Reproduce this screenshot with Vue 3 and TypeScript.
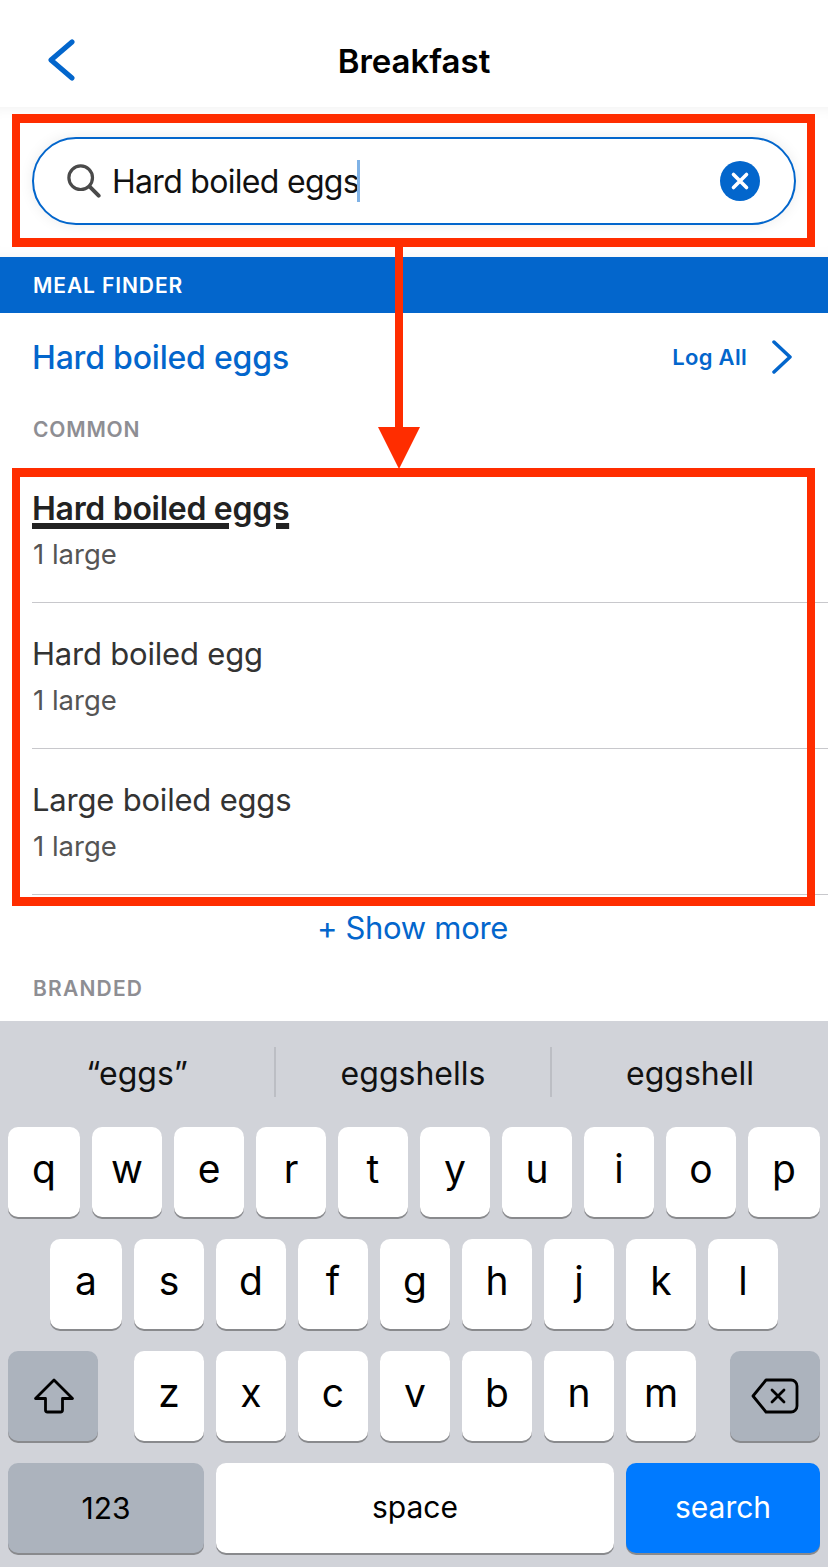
<script setup lang="ts">
const foods = [
  { name: 'Hard boiled eggs', unit: '1 large', match: true },
  { name: 'Hard boiled egg', unit: '1 large', match: false },
  { name: 'Large boiled eggs', unit: '1 large', match: false },
]
const row1 = ['q', 'w', 'e', 'r', 't', 'y', 'u', 'i', 'o', 'p']
const row2 = ['a', 's', 'd', 'f', 'g', 'h', 'j', 'k', 'l']
const row3 = ['z', 'x', 'c', 'v', 'b', 'n', 'm']
</script>

<template>
  <div class="screen">
    <header class="nav">
      <svg class="back" width="30" height="42" viewBox="0 0 30 42"><path d="M25 3 L4 21 L25 39" fill="none" stroke="#0366cc" stroke-width="5" stroke-linecap="round" stroke-linejoin="round"/></svg>
      <h1>Breakfast</h1>
    </header>

    <section class="search-wrap">
      <div class="search">
        <svg class="mag" width="34" height="34" viewBox="0 0 36 36"><circle cx="14.500" cy="14.500" r="12.500" fill="none" stroke="#4a4a4a" stroke-width="3.400"/><path d="M24 24 L33.500 33.500" stroke="#4a4a4a" stroke-width="4.200" stroke-linecap="round"/></svg>
        <span class="query">Hard boiled eggs</span><span class="caret"></span>
        <span class="clear"><svg width="20" height="20" viewBox="0 0 20 20"><path d="M3.500 3.500 L16.500 16.500 M16.500 3.500 L3.500 16.500" stroke="#fff" stroke-width="3.600" stroke-linecap="round"/></svg></span>
      </div>
    </section>

    <div class="finder">MEAL FINDER</div>

    <div class="meal">
      <span class="meal-name">Hard boiled eggs</span>
      <span class="log">Log All</span>
      <svg width="22" height="34" viewBox="0 0 22 34"><path d="M3 2 L19 17 L3 32" fill="none" stroke="#0366cc" stroke-width="3.500" stroke-linecap="round" stroke-linejoin="round"/></svg>
    </div>

    <div class="label common">COMMON</div>
    <ul class="foods">
      <li v-for="f in foods" :key="f.name" class="food">
        <div class="food-name" :class="{ match: f.match }">{{ f.name }}</div>
        <div class="food-unit">{{ f.unit }}</div>
      </li>
    </ul>

    <div class="more">+ Show more</div>
    <div class="label branded">BRANDED</div>

    <section class="keyboard">
      <div class="suggest">
        <span>“eggs”</span>
        <span>eggshells</span>
        <span>eggshell</span>
      </div>
      <div class="row row1">
        <span v-for="k in row1" :key="k" class="key">{{ k }}</span>
      </div>
      <div class="row row2">
        <span v-for="k in row2" :key="k" class="key">{{ k }}</span>
      </div>
      <div class="row row3">
        <span class="key fn wide">
          <svg class="shift" width="42" height="36" viewBox="0 0 42 36"><path d="M21 2 L39.500 20.500 H29.500 V32 a2 2 0 0 1 -2 2 H14.500 a2 2 0 0 1 -2 -2 V20.500 H2.500 Z" fill="none" stroke="#000" stroke-width="2.800" stroke-linejoin="round"/></svg>
        </span>
        <div class="letters">
          <span v-for="k in row3" :key="k" class="key">{{ k }}</span>
        </div>
        <span class="key fn wide">
          <svg width="48" height="36" viewBox="0 0 48 36"><path d="M15 2 H40 a6 6 0 0 1 6 6 V28 a6 6 0 0 1 -6 6 H15 L2 18 Z" fill="none" stroke="#000" stroke-width="2.800" stroke-linejoin="round"/><path d="M21 12 L33 24 M33 12 L21 24" stroke="#000" stroke-width="2.800" stroke-linecap="round"/></svg>
        </span>
      </div>
      <div class="row row4">
        <span class="key fn num">123</span>
        <span class="key word space">space</span>
        <span class="key word go">search</span>
      </div>
    </section>

    <div class="box box-top"></div>
    <div class="box box-list"></div>
    <svg class="arrow" width="44" height="226" viewBox="0 0 44 226"><path d="M18 0 H26 V184 H43 L22 226 L1 184 H18 Z" fill="#ff2d00"/></svg>
  </div>
</template>

<style>
html, body { margin: 0; background: #fff; }
</style>

<style scoped>
.screen {
  position: relative;
  width: 828px;
  height: 1567px;
  overflow: hidden;
  background: #fff;
  display: flex;
  flex-direction: column;
  font-family: Inter, "Liberation Sans", sans-serif;
  color: #222;
}
.nav {
  height: 107px;
  box-sizing: border-box;
  padding-top: 14px;
  flex: none;
  display: flex;
  align-items: center;
  justify-content: center;
  position: relative;
}
.nav h1 {
  margin: 0;
  font-size: 33px;
  font-weight: 600;
  color: #000;
  line-height: 40px;
}
.back { position: absolute; left: 47px; top: 39px; }
.search-wrap {
  flex: none;
  height: 150px;
  padding: 30px 32px 0;
  box-sizing: border-box;
  background: #fff;
  box-shadow: inset 0 12px 14px -12px rgba(0,0,0,.07), inset 0 -12px 14px -12px rgba(0,0,0,.05);
}
.search {
  height: 88px;
  box-sizing: border-box;
  border: 2px solid #0366cc;
  border-radius: 44px;
  background: #fff;
  box-shadow: 0 0 14px rgba(0,0,0,.08);
  display: flex;
  align-items: center;
  padding: 0 34px 0 33px;
}
.mag { flex: none; margin-right: 11px; }
.query { font-size: 32px; color: #111; letter-spacing: -.7px; }
.caret { width: 3px; height: 42px; background: #7fb2e6; margin-left: -2px; }
.clear {
  margin-left: auto;
  width: 40px;
  height: 40px;
  border-radius: 50%;
  background: #0366cc;
  display: flex;
  align-items: center;
  justify-content: center;
}
.finder {
  flex: none;
  height: 56px;
  line-height: 57px;
  background: #0366cc;
  color: #fff;
  font-size: 21px;
  font-weight: 600;
  padding-left: 33px;
  letter-spacing: .9px;
}
.meal {
  flex: none;
  height: 88px;
  display: flex;
  align-items: center;
  padding: 0 35px 0 32px;
}
.meal-name { font-size: 32px; font-weight: 500; color: #0366cc; margin-right: auto; letter-spacing: -.2px; }
.log { font-size: 22px; font-weight: 600; color: #0366cc; margin-right: 24px; letter-spacing: .3px; }
.label { font-size: 21px; font-weight: 600; color: #8e8e93; padding-left: 33px; letter-spacing: .8px; line-height: 24px; }
.common { flex: none; margin-top: 17px; height: 39px; }
.foods { list-style: none; margin: 0; padding: 0 0 0 32px; flex: none; }
.food {
  height: 146px;
  box-sizing: border-box;
  border-bottom: 1px solid #c8c8cc;
  padding-top: 31px;
}
.food-name { font-size: 31px; line-height: 40px; color: #333; letter-spacing: -.2px; }
.food-name.match {
  font-size: 32px;
  font-weight: 600;
  color: #222;
  letter-spacing: -.3px;
  padding-top: 1px;
  margin-bottom: -1px;
  text-decoration: underline;
  text-decoration-thickness: 6px;
  text-underline-offset: 3px;
}
.food-unit { font-size: 27.500px; line-height: 32px; color: #555; margin-top: 10px; padding-left: 1px; }
.more { flex: none; text-align: center; font-size: 31px; color: #0366cc; line-height: 40px; margin-top: 13px; letter-spacing: -.3px; padding-right: 3px; }
.branded { flex: none; margin-top: 29px; height: 38px; letter-spacing: 1.200px; }
.keyboard {
  position: absolute;
  left: 0;
  right: 0;
  top: 1021px;
  bottom: 0;
  background: #d1d3d9;
  display: flex;
  flex-direction: column;
}
.suggest {
  height: 106px;
  flex: none;
  display: grid;
  grid-template-columns: 274px 276px 1fr;
  align-items: center;
  font-size: 32px;
  color: #111;
  text-align: center;
  padding-bottom: 4px;
  box-sizing: border-box;
}
.suggest span { height: 50px; line-height: 53px; }
.suggest span + span { border-left: 2px solid #bcbec4; }
.row {
  display: flex;
  gap: 12px;
  padding: 0 8px;
  height: 90px;
  margin-bottom: 22px;
  flex: none;
}
.row1 .key, .row2 .key { width: 70px; flex: none; }
.row1 .key:first-child, .row1 .key:last-child, .row2 .key:first-child { width: 72px; }
.row2 { padding: 0 50px; }
.row3 { gap: 0; }
.letters { display: flex; gap: 12px; margin: 0 34px 0 36px; }
.letters .key { width: 70px; flex: none; }
.key {
  flex: 1;
  background: #fff;
  border-radius: 10px;
  box-shadow: 0 2px 0 #898a8d;
  display: flex;
  align-items: center;
  justify-content: center;
  font-size: 39px;
  padding-bottom: 8px;
  box-sizing: border-box;
  color: #000;
}
.fn { background: #acb3bd; padding-bottom: 0; }
.wide { flex: none; width: 90px; }
.shift { margin-left: 1px; }
.row4 { gap: 12px; }
.num { flex: none; width: 196px; font-size: 30px; }
.word { font-size: 30px; padding-bottom: 2px; }
.space { flex: none; width: 398px; }
.go { flex: none; width: 194px; background: #007aff; color: #fff; }
.box {
  position: absolute;
  box-sizing: border-box;
  border-style: solid;
  border-color: #ff2d00;
  border-width: 9px 8px;
  left: 12px;
  width: 803px;
}
.box-top { top: 114px; height: 133px; }
.box-list { top: 468px; height: 438px; }
.arrow { position: absolute; left: 377px; top: 243px; }
</style>
